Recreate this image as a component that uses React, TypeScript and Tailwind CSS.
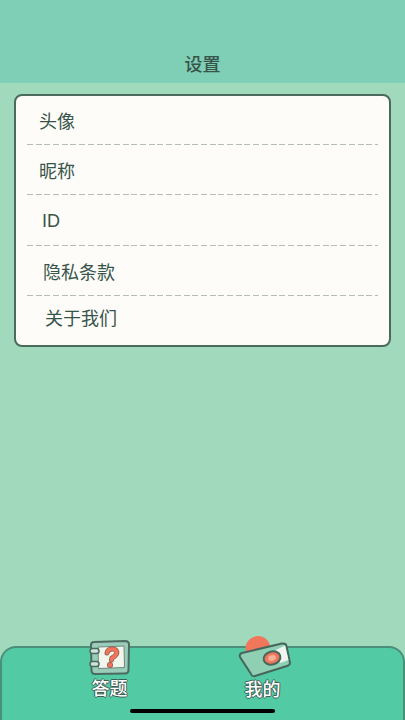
const font = "font-['Liberation_Sans','Noto_Sans_CJK_SC',sans-serif]"

const rows = [
  { label: "头像", cls: "h-[48px] pl-[12px] pt-[4px]" },
  { label: "昵称", cls: "h-[49px] pl-[12px] pt-[5px]" },
  { label: "ID", cls: "h-[50px] pl-[15px] pt-[2px]" },
  { label: "隐私条款", cls: "h-[49px] pl-[16px] pt-[5px]" },
  { label: "关于我们", cls: "h-[49px] pl-[18px] pb-[3px]" },
]

function NotebookIcon() {
  return (
    <svg width="41" height="35" viewBox="0 0 41 35" className="block">
      <path d="M5 2 L36 1 Q40 1 40 4.500 L39.500 30 Q39.500 33.500 36 33.500 L6 34 Q2.500 34 2.500 30 L2 5 Q2 2 5 2 Z" fill="#9accb9" stroke="#4b6b60" strokeWidth="2" />
      <path d="M9 7 L35 6 L35.500 27.500 L9.500 28.500 Z" fill="#f1f6ec" stroke="#6b887c" strokeWidth="1" />
      <rect x="1" y="8.500" width="9" height="5" rx="2.500" fill="#cfe3d8" stroke="#4b6b60" strokeWidth="1.500" />
      <rect x="1" y="21.500" width="9" height="5" rx="2.500" fill="#cfe3d8" stroke="#4b6b60" strokeWidth="1.500" />
      <path d="M18 13 Q19 8.500 24 9 Q29 10 27.500 14 Q26 16.500 23 18 L22.500 20" fill="none" stroke="#8f5a4c" strokeWidth="5" strokeLinecap="round" />
      <circle cx="21" cy="25" r="3" fill="#8f5a4c" />
      <path d="M18 13 Q19 8.500 24 9 Q29 10 27.500 14 Q26 16.500 23 18 L22.500 20" fill="none" stroke="#f2735a" strokeWidth="3.500" strokeLinecap="round" />
      <circle cx="21" cy="25" r="2.200" fill="#f2735a" />
    </svg>
  )
}

function WalletIcon() {
  return (
    <svg width="53" height="42" viewBox="0 0 53 42" className="block">
      <circle cx="20" cy="12.500" r="12.500" fill="#f0775c" />
      <path d="M4 17 L44 7.500 Q48 7 48.500 10 L52 27 Q52 29 49 30 L17 40 Q14 41 13 38 L2 21 Q1 18 4 17 Z" fill="#8fd0b4" stroke="#46665b" strokeWidth="2" />
      <path d="M38 14 L47 9.500 L50.500 24 L42 27 Z" fill="#eef6ef" />
      <ellipse cx="34" cy="22" rx="8.500" ry="6.500" fill="#f0775c" stroke="#46665b" strokeWidth="2" transform="rotate(-15 34 22)" />
      <ellipse cx="34" cy="22" rx="4" ry="2.800" fill="#f5b09c" transform="rotate(-15 34 22)" />
    </svg>
  )
}

function TabItem({ label, icon, cls }: { label: string; icon: React.ReactNode; cls: string }) {
  return (
    <div className={`flex flex-col items-center ${cls}`}>
      {icon}
      <span className="text-[18px] leading-[24px] font-medium text-white [text-shadow:-1px_0_0_#3d5c52,1px_0_0_#3d5c52,0_-1px_0_#3d5c52,0_1px_0_#3d5c52]">
        {label}
      </span>
    </div>
  )
}

export default function App() {
  return (
    <div className={`relative flex h-[720px] w-[405px] flex-col overflow-hidden bg-[#a0d9bb] ${font}`}>
      <header className="flex h-[83px] items-end justify-center bg-[#7fceb6] pb-[5px]">
        <span className="text-[18px] leading-[26px] font-medium text-[#37544a]">设置</span>
      </header>

      <main className="flex-1 px-[14px] pt-[11px]">
        <div className="h-[253px] rounded-[8px] border-2 border-[#4a6b5c] bg-[#fdfcf8] px-[11px]">
          {rows.map((row, i) => (
            <div key={row.label}>
              <div className={`flex items-center text-[18px] leading-[26px] text-[#37544a] ${row.cls}`}>
                {row.label}
              </div>
              {i < rows.length - 1 && (
                <div className="h-px bg-[repeating-linear-gradient(90deg,#b4bdb6_0,#b4bdb6_6px,transparent_6px,transparent_8.7px)]" />
              )}
            </div>
          ))}
        </div>
      </main>

      <nav className="flex h-[74px] rounded-t-[16px] border-x-2 border-t-2 border-[#4b8f78] bg-[#52cba5]">
        <TabItem label="答题" icon={<NotebookIcon />} cls="ml-[87px] -mt-[8px] w-[41px] [&>span]:mt-[2px]" />
        <TabItem label="我的" icon={<WalletIcon />} cls="ml-[108px] -mt-[12px] w-[53px] [&>span]:-ml-[4px]" />
      </nav>

      <div className="absolute bottom-[7px] left-[130px] h-[4px] w-[145px] rounded-full bg-black" />
    </div>
  )
}
